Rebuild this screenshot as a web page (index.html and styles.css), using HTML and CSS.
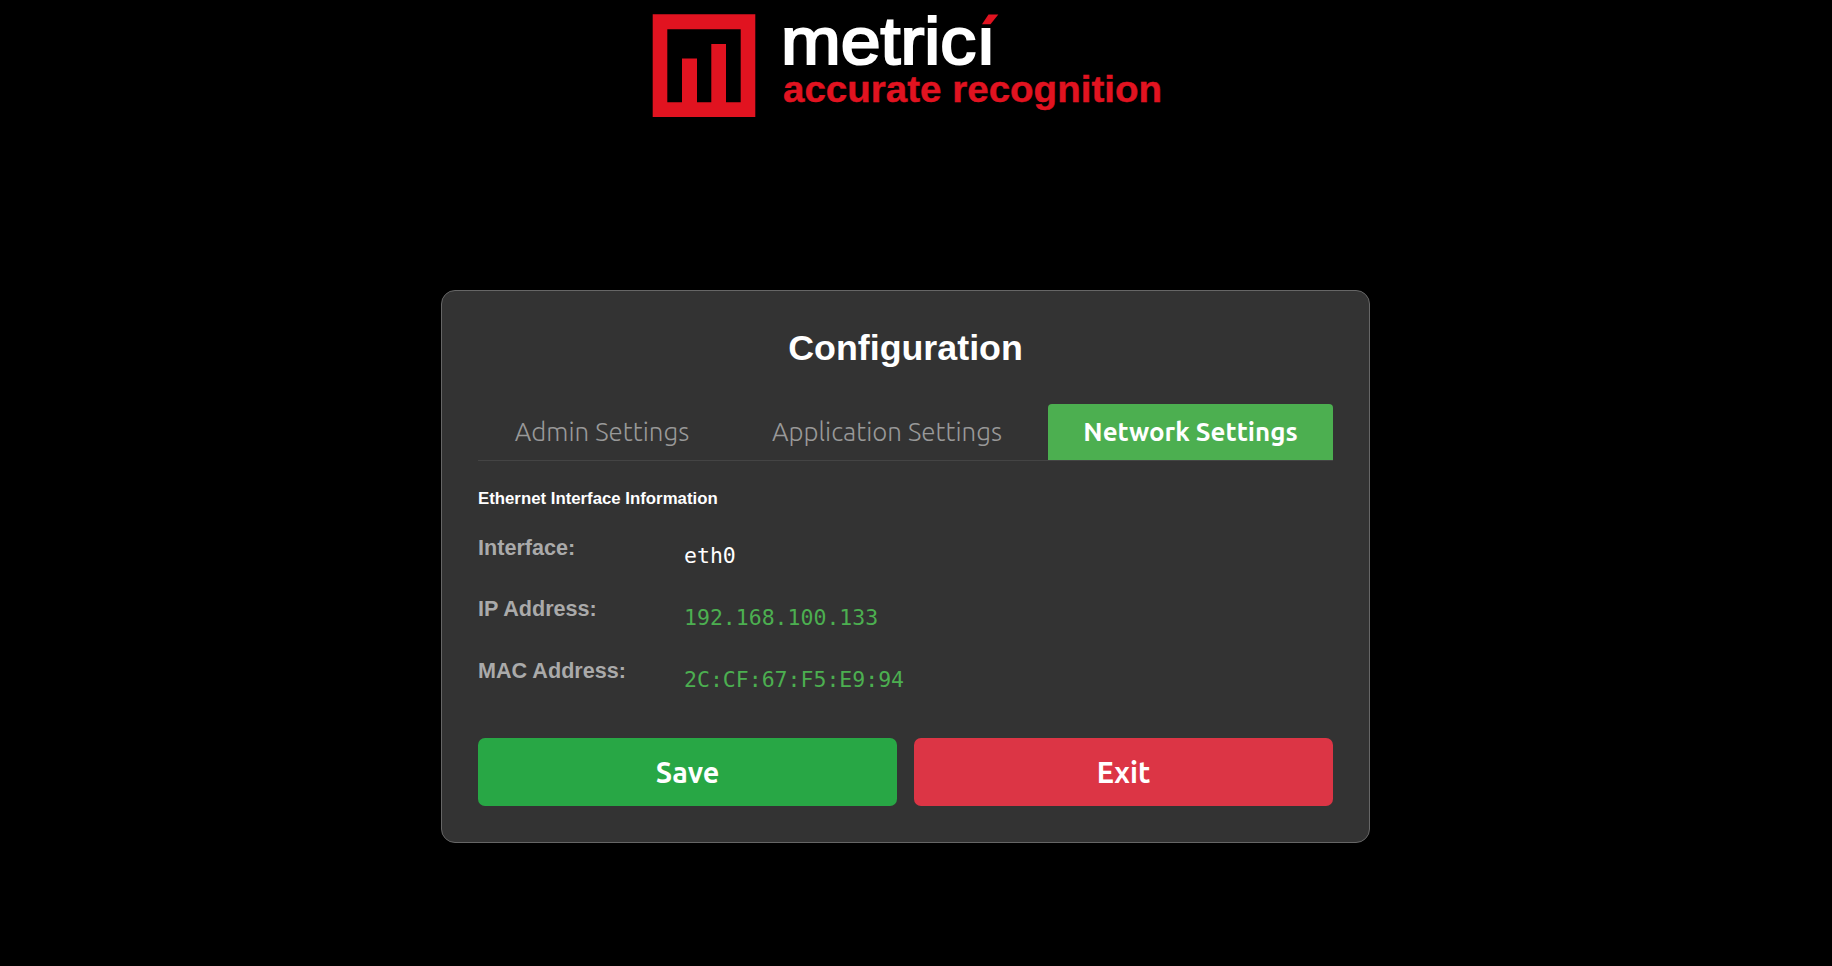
FILE: index.html
```html
<!DOCTYPE html>
<html lang="en">
<head>
  <meta charset="UTF-8">
  <meta name="viewport" content="width=device-width, initial-scale=1.0">
  <title>Configuration</title>
  <link rel="stylesheet" href="styles.css">
</head>
<body>
  <!-- Logo -->
  <header class="logo">
    <svg width="521" height="125" viewBox="645 0 521 125" role="img" aria-label="metrici accurate recognition">
      <path class="logo-red" fill-rule="evenodd" d="M652.7 14.3H755.3V117H652.7ZM667.3 29.3V102.3H682V58.5H697V102.3H711.3V44H726V102.3H740.7V29.3Z"/>
      <text class="logo-name" x="781" y="64.4" textLength="215" lengthAdjust="spacingAndGlyphs">metricı</text>
      <path class="logo-red" d="M982 24.3L988.5 14.5H998.3L990.5 24.3Z"/>
      <text class="logo-tagline" x="783" y="102.3" textLength="379" lengthAdjust="spacingAndGlyphs">accurate recognition</text>
    </svg>
  </header>

  <!-- Configuration Card -->
  <main class="card">
    <h1>Configuration</h1>

    <div class="tabs">
      <button class="tab tab-admin">Admin Settings</button>
      <button class="tab tab-app">Application Settings</button>
      <button class="tab tab-network active">Network Settings</button>
    </div>

    <!-- Network Settings -->
    <section class="network">
      <h3>Ethernet Interface Information</h3>
      <div class="info-row">
        <span class="info-label">Interface:</span>
        <span class="info-value">eth0</span>
      </div>
      <div class="info-row">
        <span class="info-label">IP Address:</span>
        <span class="info-value address">192.168.100.133</span>
      </div>
      <div class="info-row">
        <span class="info-label">MAC Address:</span>
        <span class="info-value address">2C:CF:67:F5:E9:94</span>
      </div>
    </section>

    <div class="actions">
      <button class="btn btn-save">Save</button>
      <button class="btn btn-exit">Exit</button>
    </div>
  </main>
</body>
</html>
```
FILE: styles.css
```css
/* General Reset */
* {
  box-sizing: border-box;
}

body {
  margin: 0;
  padding-right: 21px;
  min-height: 100vh;
  background-color: #000;
  color: #fff;
  font-family: "Liberation Sans", Arial, sans-serif;
  font-size: 18px;
  display: flex;
  flex-direction: column;
  align-items: center;
}

/* Logo */
.logo svg {
  display: block;
}

.logo-red {
  fill: #e11320;
}

.logo-name {
  font-size: 66.5px;
  fill: #fff;
  stroke: #fff;
  stroke-width: 2.2px;
}

.logo-tagline {
  font-size: 37px;
  font-weight: bold;
  fill: #e11320;
  stroke: #e11320;
  stroke-width: 0.4px;
}

/* Card */
.card {
  width: 929px;
  height: 553px;
  margin-top: 165px;
  padding: 36px;
  background-color: #333;
  border: 1px solid #666;
  border-radius: 14px;
}

h1 {
  margin: 0 0 35px;
  padding-top: 1px;
  font-size: 35.8px;
  line-height: 41px;
  text-align: center;
}

/* Tabs */
.tabs {
  display: flex;
  gap: 9px;
  border-bottom: 1px solid #444;
}

.tab {
  height: 56px;
  padding: 0 0 2px;
  border: none;
  border-radius: 4px 4px 0 0;
  background: none;
  color: #999;
  font-family: Ubuntu, "Noto Sans", sans-serif;
  font-size: 25.92px;
  font-weight: 340;
  white-space: nowrap;
}

.tab-admin {
  width: 248px;
}

.tab-app {
  width: 304px;
}

.tab-network {
  width: 285px;
}

.tab.active {
  background-color: #4caf50;
  color: #fff;
  font-weight: 600;
}

/* Network Settings */
.network {
  padding-top: 28px;
}

h3 {
  margin: 0 0 17px;
  font-size: 16.8px;
  line-height: 20px;
}

.info-row {
  display: flex;
  height: 61.7px;
  padding-top: 8.7px;
}

.info-label {
  width: 206px;
  color: #aaa;
  font-size: 21.6px;
  font-weight: bold;
  line-height: 25px;
}

.info-value {
  padding-top: 8.5px;
  font-family: "DejaVu Sans Mono", monospace;
  font-size: 21.5px;
  line-height: 25px;
}

.address {
  color: #4caf50;
}

/* Buttons */
.actions {
  display: flex;
  gap: 17px;
  margin-top: 27px;
}

.btn {
  flex: 1;
  height: 68px;
  border: none;
  border-radius: 7px;
  color: #fff;
  font-family: Ubuntu, "Noto Sans", sans-serif;
  font-size: 28.8px;
  font-weight: 600;
}

.btn-save {
  background-color: #28a745;
}

.btn-exit {
  background-color: #dc3545;
}
```
